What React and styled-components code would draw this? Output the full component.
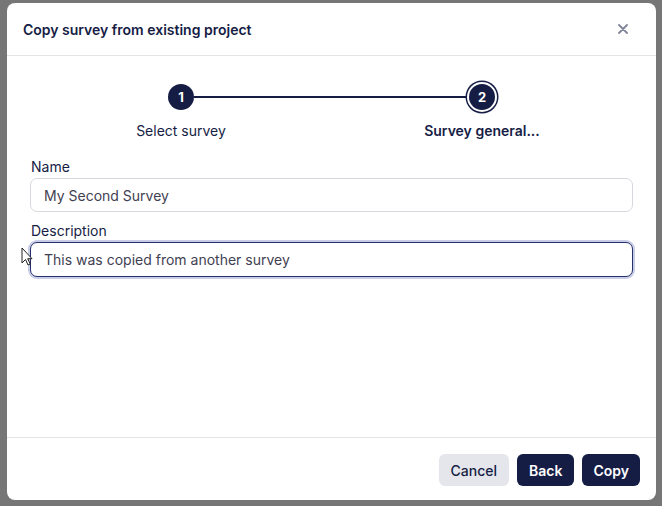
import React from "react";
import styled, { createGlobalStyle, css } from "styled-components";

const navy = "#161d45";

const Global = createGlobalStyle`
  html, body { margin: 0; padding: 0; }
  body {
    background: #767676;
    font-family: Inter, "Noto Sans", sans-serif;
    color: ${navy};
    -webkit-font-smoothing: antialiased;
  }
`;

const Page = styled.div`
  height: 506px;
  padding: 3px 6px 0 7px;
  box-sizing: border-box;
  position: relative;
`;

const Dialog = styled.div`
  width: 649px;
  height: 497px;
  background: #fff;
  border-radius: 8px;
  display: flex;
  flex-direction: column;
  overflow: hidden;
`;

const Header = styled.div`
  height: 52px;
  flex: none;
  display: flex;
  align-items: center;
  justify-content: space-between;
  padding: 0 28px 0 16px;
  border-bottom: 1px solid #e4e4e7;
`;

const Title = styled.h2`
  margin: 0;
  font-size: 14px;
  font-weight: 600;
  color: ${navy};
`;

const Close = styled.button`
  border: 0;
  background: none;
  padding: 0;
  display: flex;
  color: #81859a;
  cursor: pointer;
`;

const Body = styled.div`
  flex: 1;
  padding: 25px 23px 0;
  display: flex;
  flex-direction: column;
`;

const Track = styled.div`
  width: 333px;
  align-self: center;
  display: flex;
  align-items: center;
`;

const Dot = styled.div`
  width: 32px;
  height: 32px;
  flex: none;
  display: flex;
  align-items: center;
  justify-content: center;
`;

const Circle = styled.span`
  width: 26px;
  height: 26px;
  border-radius: 50%;
  background: ${navy};
  color: #fff;
  font-size: 13px;
  font-weight: 700;
  display: flex;
  align-items: center;
  justify-content: center;
  ${(p) =>
    p.$active &&
    css`
      box-shadow: 0 0 0 2px #fff, 0 0 0 3.5px ${navy};
    `}
`;

const Line = styled.div`
  flex: 1;
  height: 2px;
  background: ${navy};
  margin: 0 -3px;
`;

const Labels = styled.div`
  width: 461px;
  align-self: center;
  display: flex;
  justify-content: space-between;
  margin-top: 8px;
`;

const StepLabel = styled.span`
  width: 160px;
  text-align: center;
  font-size: 14px;
  line-height: 20px;
  font-weight: ${(p) => (p.$active ? 600 : 400)};
  color: ${navy};
`;

const Field = styled.label`
  display: flex;
  flex-direction: column;
  margin-top: ${(p) => (p.$first ? "16px" : "9px")};
`;

const FieldLabel = styled.span`
  font-size: 14px;
  line-height: 20px;
  font-weight: 400;
  color: ${navy};
  padding-left: 1px;
  margin-bottom: 1px;
`;

const Input = styled.input`
  height: ${(p) => (p.$focused ? "35px" : "34px")};
  box-sizing: border-box;
  border: 1px solid ${(p) => (p.$focused ? "#26306a" : "#d6d8de")};
  box-shadow: ${(p) => (p.$focused ? "0 0 0 2px #c9cde6" : "none")};
  border-radius: 7px;
  padding: 0 13px;
  font-family: inherit;
  font-size: 14px;
  color: #3f4152;
  outline: none;
  background: #fff;
`;

const Footer = styled.div`
  flex: none;
  height: 63px;
  border-top: 1px solid #e4e4e7;
  display: flex;
  align-items: flex-start;
  justify-content: flex-end;
  gap: 8px;
  padding: 16px 16px 0;
  box-sizing: border-box;
`;

const Button = styled.button`
  height: 32px;
  border: 0;
  border-radius: 6px;
  padding: 0 ${(p) => p.$pad || 12}px;
  font-family: inherit;
  font-size: 14px;
  font-weight: ${(p) => (p.$primary ? 600 : 500)};
  background: ${(p) => (p.$primary ? navy : "#e4e6eb")};
  color: ${(p) => (p.$primary ? "#fff" : navy)};
  cursor: pointer;
`;

const Pointer = styled.svg`
  position: absolute;
  left: 21px;
  top: 247px;
`;

export default function App() {
  return (
    <>
      <Global />
      <Page>
        <Dialog>
          <Header>
            <Title>Copy survey from existing project</Title>
            <Close aria-label="Close">
              <svg width="10" height="10" viewBox="0 0 10 10">
                <path d="M1 1l8 8M9 1l-8 8" stroke="currentColor" strokeWidth="1.8" strokeLinecap="round" />
              </svg>
            </Close>
          </Header>
          <Body>
            <Track>
              <Dot><Circle>1</Circle></Dot>
              <Line />
              <Dot><Circle $active>2</Circle></Dot>
            </Track>
            <Labels>
              <StepLabel>Select survey</StepLabel>
              <StepLabel $active>Survey general...</StepLabel>
            </Labels>
            <Field $first>
              <FieldLabel>Name</FieldLabel>
              <Input defaultValue="My Second Survey" />
            </Field>
            <Field>
              <FieldLabel>Description</FieldLabel>
              <Input $focused defaultValue="This was copied from another survey" />
            </Field>
          </Body>
          <Footer>
            <Button>Cancel</Button>
            <Button $primary>Back</Button>
            <Button $primary $pad={11}>Copy</Button>
          </Footer>
        </Dialog>
        <Pointer width="12" height="19" viewBox="0 0 12 19">
          <path d="M1 1v15l3.5-3.5 2.5 5.5 2.2-1-2.5-5.3H11z" fill="#fff" stroke="#222" strokeWidth="1" strokeLinejoin="round" />
        </Pointer>
      </Page>
    </>
  );
}
